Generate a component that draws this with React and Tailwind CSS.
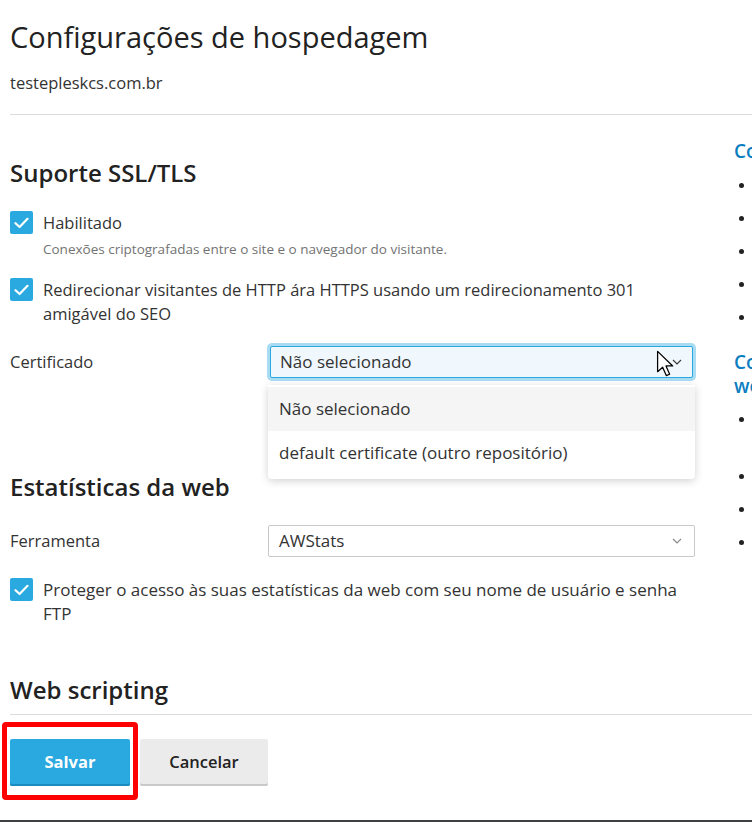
import React from "react";

const font = { fontFamily: '"Open Sans", "Noto Sans", sans-serif' };

function Check() {
  return (
    <div className="w-[23px] h-[23px] rounded-[2px] bg-[#29a9df] flex items-center justify-center shrink-0">
      <svg width="15" height="12" viewBox="0 0 15 12" fill="none">
        <path d="M1.5 6.2 L5.6 10 L13.5 1.8" stroke="white" strokeWidth="2.2" strokeLinecap="round" strokeLinejoin="round" />
      </svg>
    </div>
  );
}

function Chevron({ color = "#777" }) {
  return (
    <svg width="10" height="6" viewBox="0 0 10 6" fill="none">
      <path d="M1 1 L5 5 L9 1" stroke={color} strokeWidth="1.1" />
    </svg>
  );
}

function Bullet() {
  return (
    <div className="flex items-center h-[24px] mb-[9px]">
      <span className="ml-[5px] w-[5px] h-[5px] rounded-full bg-[#222]" />
    </div>
  );
}

export default function App() {
  return (
    <div style={font} className="w-[752px] h-[822px] overflow-hidden bg-white text-[#333] relative">
      <div className="pt-[19px] pl-[10px]">
        <h1 className="text-[29px] leading-[36px] text-[#222] font-normal">Configurações de hospedagem</h1>
        <div className="mt-[16px] text-[16.5px] leading-[24px] text-[#333]">testepleskcs.com.br</div>
        <div className="mt-[19px] h-px bg-[#dcdcdc] w-[800px]" />

        <div className="flex">
          <div className="w-[685px] shrink-0">
            <h2 className="mt-[43px] text-[24px] leading-[30px] font-semibold text-[#222]">Suporte SSL/TLS</h2>

            <div className="mt-[23px] flex items-start gap-[10px]">
              <Check />
              <div>
                <div className="text-[16.5px] leading-[24px]">Habilitado</div>
                <div className="mt-[4px] text-[13.5px] leading-[20px] text-[#737373]">Conexões criptografadas entre o site e o navegador do visitante.</div>
              </div>
            </div>

            <div className="mt-[19px] flex items-start gap-[10px]">
              <Check />
              <div className="text-[16.5px] leading-[24px] w-[630px]">Redirecionar visitantes de HTTP ára HTTPS usando um redirecionamento 301 amigável do SEO</div>
            </div>

            <div className="mt-[20px] flex items-center">
              <div className="w-[260px] text-[16.5px] leading-[24px]">Certificado</div>
              <div className="relative w-[423px]">
                <div className="h-[32px] border border-[#29a9df] bg-[#f0f8fe] rounded-[2px] ring-[3px] ring-[#a9dcf3] flex items-center justify-between pl-[9px] pr-[10px] text-[17px]">
                  <span>Não selecionado</span>
                  <Chevron color="#333" />
                </div>
                <svg className="absolute left-[386px] top-[4px]" width="20" height="28" viewBox="0 0 14 20">
                  <path d="M1 1 L1 15.5 L4.6 12.3 L7.2 18.3 L9.6 17.3 L7 11.4 L11.8 11.4 Z" fill="white" stroke="black" strokeWidth="0.9" strokeLinejoin="round" />
                </svg>
                <div className="absolute left-[-2px] top-[39px] w-[427px] bg-white rounded-b-[4px] shadow-[0_2px_8px_rgba(0,0,0,0.18)] z-10 pt-[2px]">
                  <div className="h-[44px] bg-[#f5f5f5] flex items-center pl-[11px] text-[17px] leading-[24px]">Não selecionado</div>
                  <div className="h-[44px] flex items-center pl-[11px] text-[17px] leading-[24px]">default certificate (outro repositório)</div>
                  <div className="h-[4px]" />
                </div>
              </div>
            </div>

            <h2 className="mt-[94px] text-[24px] leading-[30px] font-semibold text-[#222]">Estatísticas da web</h2>

            <div className="mt-[23px] flex items-center">
              <div className="w-[258px] text-[16.5px] leading-[24px]">Ferramenta</div>
              <div className="w-[427px] h-[32px] border border-[#c9c9c9] rounded-[2px] bg-white flex items-center justify-between pl-[10px] pr-[12px] text-[17px]">
                <span>AWStats</span>
                <Chevron color="#888" />
              </div>
            </div>

            <div className="mt-[21px] flex items-start gap-[10px]">
              <Check />
              <div className="text-[17px] leading-[24px] w-[640px]">Proteger o acesso às suas estatísticas da web com seu nome de usuário e senha FTP</div>
            </div>
          </div>

          <div className="ml-[39px] w-[300px] shrink-0 text-[16px] text-[#333]">
            <h3 className="mt-[24px] text-[19px] leading-[24px] font-semibold text-[#0b7ec1] whitespace-nowrap">Co</h3>
            <div className="mt-[10px]">
              <Bullet /><Bullet /><Bullet /><Bullet /><Bullet />
            </div>
            <h3 className="mt-[21px] text-[19px] leading-[24px] font-semibold text-[#0b7ec1]">
              <div>Co</div>
              <div>we</div>
            </h3>
            <div className="mt-[9px]">
              <div className="flex items-start h-[48px] mb-[9px]">
                <span className="ml-[5px] mt-[10px] w-[5px] h-[5px] rounded-full bg-[#222]" />
              </div>
              <Bullet /><Bullet /><Bullet />
            </div>
          </div>
        </div>

        <h2 className="mt-[49px] text-[24px] leading-[30px] font-semibold text-[#222]">Web scripting</h2>
        <div className="mt-[9px] h-px bg-[#dcdcdc] w-[800px]" />

        <div className="mt-[24px] flex">
          <div className="relative">
            <button className="w-[120px] h-[47px] bg-[#29a9df] text-white font-bold text-[16.5px] rounded-[2px] shadow-[inset_0_-2px_0_#1a8cbf]">Salvar</button>
            <div className="absolute left-[-8px] top-[-17px] w-[136px] h-[78px] border-[5px] border-[#ff0000] rounded-[4px]" />
          </div>
          <button className="ml-[10px] w-[128px] h-[47px] bg-[#ebebeb] text-[#222] font-semibold text-[16.5px] rounded-[2px] shadow-[inset_0_-2px_0_#c9c9c9]">Cancelar</button>
        </div>
      </div>
      <div className="absolute left-0 bottom-0 w-full h-[2px] bg-[#3c4043]" />
    </div>
  );
}
